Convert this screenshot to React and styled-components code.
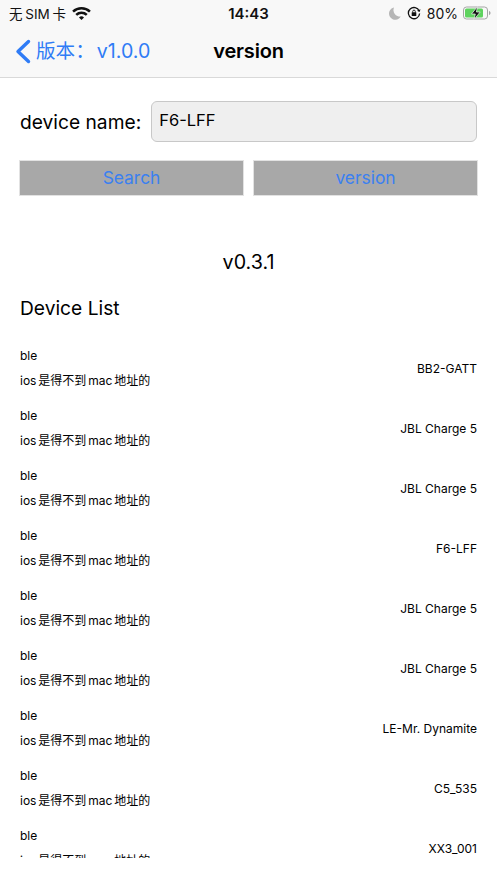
import React from 'react';
import styled, { createGlobalStyle } from 'styled-components';

const Global = createGlobalStyle`
  html, body { margin: 0; padding: 0; background: #fff; }
  * { box-sizing: border-box; }
  body { font-family: Inter, "Noto Sans CJK SC", sans-serif; color: #000; }
`;
const Page = styled.div`width: 497px; height: 883px; overflow: hidden; display: flex; flex-direction: column; background: #fff;`;
const Header = styled.header`height: 78px; background: #f8f8f8; border-bottom: 1px solid #d9d9d9; display: flex; flex-direction: column;`;
const StatusBar = styled.div`height: 27px; display: grid; grid-template-columns: 1fr auto 1fr; align-items: center; padding: 0 6px 1px; font-size: 13.5px; color: #111;`;
const StatusLeft = styled.div`display: flex; align-items: center; gap: 6px; padding-left: 3px; word-spacing: -1px;`;
const Clock = styled.div`font-weight: 600; font-size: 15px;`;
const StatusRight = styled.div`display: flex; align-items: center; justify-content: flex-end; gap: 6px; font-size: 14px;`;
const Percent = styled.span`margin-right: -1px;`;
const NavBar = styled.div`position: relative; flex: 1; display: flex; align-items: center; justify-content: center; padding-bottom: 2px;`;
const Back = styled.div`position: absolute; left: 15px; top: 10px; display: flex; align-items: center; gap: 5px; color: #2f7cf6; font-size: 19.6px; line-height: 28px; word-spacing: -3.5px;`;
const NavTitle = styled.div`font-size: 20px; font-weight: 600; letter-spacing: -0.2px;`;
const Main = styled.main`padding: 23px 20px 0 19px; height: 780px; display: flex; flex-direction: column;`;
const FormRow = styled.div`display: flex; align-items: center; gap: 10px; height: 41px;`;
const Label = styled.label`font-size: 19.2px; padding-left: 1px; white-space: nowrap;`;
const Field = styled.div`flex: 1; height: 41px; border: 1px solid #c8c8c8; border-radius: 6px; background: #efefef; font-size: 16.5px; line-height: 37px; padding-left: 7px;`;
const Buttons = styled.div`display: grid; grid-template-columns: 225px 225px; gap: 9px; margin-top: 18px;`;
const ActionButton = styled.button`height: 36px; border: 1px solid #e2e2e2; background: #a8a8a8; color: #3b80f0; font: inherit; font-size: 17.4px; padding: 0 0 2px;`;
const Version = styled.div`margin-top: 53px; height: 26px; line-height: 26px; text-align: center; font-size: 19.7px; padding-left: 1px;`;
const ListTitle = styled.h2`margin: 20px 0 0 1px; height: 26px; line-height: 26px; font-size: 19.2px; font-weight: 400;`;
const List = styled.div`margin-top: 17px; height: 520px; overflow: hidden;`;
const Row = styled.div`height: 60px; display: flex; align-items: center; justify-content: space-between; font-size: 12px;`;
const RowLeft = styled.div`display: flex; flex-direction: column; gap: 7px; padding-left: 1px; word-spacing: -1.5px;`;
const RowLine = styled.div`height: 18px; line-height: 18px;`;
const RowName = styled.div`padding-bottom: 0;`;

const devices = ['BB2-GATT','JBL Charge 5','JBL Charge 5','F6-LFF','JBL Charge 5','JBL Charge 5','LE-Mr. Dynamite','C5_535','XX3_001'];

const Wifi = () => (
  <svg width="19" height="15" viewBox="0 0 18 14" fill="none" stroke="#111" strokeWidth="2.4">
    <path d="M1 5.2a11.5 11.5 0 0 1 16 0" />
    <path d="M4 8.3a7.2 7.2 0 0 1 10 0" />
    <path d="M9 13.2 6.6 10.8a3.4 3.4 0 0 1 4.8 0Z" fill="#111" stroke="none" />
  </svg>
);
const Moon = () => (
  <svg width="12" height="13" viewBox="0 0 12 13"><path d="M5 .5a6.2 6.2 0 1 0 6.7 9A6.5 6.5 0 0 1 5 .5Z" fill="#b5b5b5" /></svg>
);
const Lock = () => (
  <svg width="14" height="14" viewBox="0 0 14 14" fill="none">
    <path d="M12.2 5A5.6 5.6 0 1 0 12.6 7.5" stroke="#111" strokeWidth="1.3" />
    <path d="M13.5 3.2 12.6 6 10 4.8Z" fill="#111" />
    <rect x="4.7" y="6.3" width="4.6" height="3.6" rx=".5" fill="#111" />
    <path d="M5.7 6.5V5.4a1.3 1.3 0 0 1 2.6 0v1.1" stroke="#111" strokeWidth=".9" />
  </svg>
);
const Battery = () => (
  <svg width="28" height="14" viewBox="0 0 28 14" fill="none">
    <rect x=".5" y="1" width="24" height="12" rx="3" stroke="#a5a5a5" />
    <rect x="2" y="2.500" width="18" height="9" rx="1.500" fill="#5fd35f" />
    <path d="M26 5v4c1-.3 1.500-1 1.500-2S27 5.300 26 5Z" fill="#a5a5a5" />
    <path d="M14.500 .6 8.500 8h3.800l-1.200 5.400L17.200 6h-3.800Z" fill="#111" stroke="#f8f8f8" strokeWidth=".7" />
  </svg>
);
const Chevron = () => (
  <svg width="16" height="25" viewBox="0 0 16 25" fill="none" stroke="#2f7cf6" strokeWidth="3.400" strokeLinecap="round" strokeLinejoin="round">
    <path d="M13.500 2.500 3 12.500l10.500 10" />
  </svg>
);

export default function App() {
  return (
    <Page>
      <Global />
      <Header>
        <StatusBar>
          <StatusLeft>无 SIM 卡 <Wifi /></StatusLeft>
          <Clock>14:43</Clock>
          <StatusRight><Moon /><Lock /><Percent>80%</Percent><Battery /></StatusRight>
        </StatusBar>
        <NavBar>
          <Back><Chevron />版本： v1.0.0</Back>
          <NavTitle>version</NavTitle>
        </NavBar>
      </Header>
      <Main>
        <FormRow>
          <Label>device name:</Label>
          <Field>F6-LFF</Field>
        </FormRow>
        <Buttons>
          <ActionButton>Search</ActionButton>
          <ActionButton>version</ActionButton>
        </Buttons>
        <Version>v0.3.1</Version>
        <ListTitle>Device List</ListTitle>
        <List>
          {devices.map((name, i) => (
            <Row key={i}>
              <RowLeft>
                <RowLine>ble</RowLine>
                <RowLine>ios 是得不到 mac 地址的</RowLine>
              </RowLeft>
              <RowName>{name}</RowName>
            </Row>
          ))}
        </List>
      </Main>
    </Page>
  );
}
